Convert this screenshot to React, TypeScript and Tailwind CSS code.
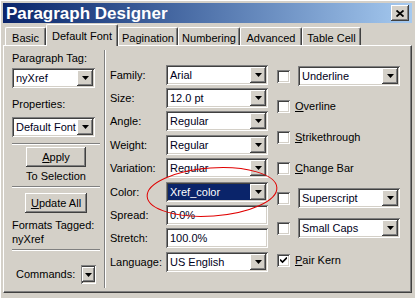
import React from "react";

const raised =
  "shadow-[inset_-1px_-1px_#404040,inset_1px_1px_#ffffff,inset_-2px_-2px_#808080,inset_2px_2px_#d4d0c8]";
const sunken =
  "shadow-[inset_1px_1px_#808080,inset_-1px_-1px_#ffffff,inset_2px_2px_#404040,inset_-2px_-2px_#d4d0c8]";

function Arrow() {
  return (
    <svg width="7" height="4" viewBox="0 0 7 4">
      <path d="M0 0h7L3.5 4z" fill="#000" />
    </svg>
  );
}

function DropBtn({ className = "w-[16px] h-[16px]" }: { className?: string }) {
  return (
    <div className={`flex items-center justify-center bg-[#d4d0c8] ${raised} ${className}`}>
      <Arrow />
    </div>
  );
}

function Combo({ value, width, selected, noButton }: { value: string; width: string; selected?: boolean; noButton?: boolean }) {
  return (
    <div className={`flex h-[20px] p-[2px] bg-white ${sunken} ${width}`}>
      <div
        className={`flex-1 flex items-center pl-[2px] leading-none whitespace-nowrap overflow-hidden ${
          selected ? "bg-[#0a246a] text-white" : "text-[#000020]"
        }`}
      >
        {value}
      </div>
      {!noButton && <DropBtn />}
    </div>
  );
}

function Check({ checked }: { checked?: boolean }) {
  return (
    <div className={`flex items-center justify-center w-[13px] h-[13px] bg-white shrink-0 ${sunken}`}>
      {checked && (
        <svg width="7" height="7" viewBox="0 0 7 7">
          <path d="M0 2.5l2.5 2.5L7 0.5" stroke="#000" strokeWidth="1.6" fill="none" />
        </svg>
      )}
    </div>
  );
}

function Sep() {
  return <div className="h-[2px] border-t border-t-[#808080] border-b border-b-white" />;
}

const tabs = [
  { label: "Basic", w: "w-[41px]" },
  { label: "Default Font", w: "w-[72px]", active: true },
  { label: "Pagination", w: "w-[60px]" },
  { label: "Numbering", w: "w-[62px]" },
  { label: "Advanced", w: "w-[62px]" },
  { label: "Table Cell", w: "w-[59px]" },
];

const fields = [
  { label: "Family:", value: "Arial", mt: "mt-0" },
  { label: "Size:", value: "12.0 pt", mt: "mt-[3px]" },
  { label: "Angle:", value: "Regular", mt: "mt-[3px]" },
  { label: "Weight:", value: "Regular", mt: "mt-[4px]" },
  { label: "Variation:", value: "Regular", mt: "mt-[3px]" },
  { label: "Color:", value: "Xref_color", mt: "mt-[4px]", selected: true },
  { label: "Spread:", value: "0.0%", mt: "mt-[3px]", plain: true },
  { label: "Stretch:", value: "100.0%", mt: "mt-[3px]", plain: true },
  { label: "Language:", value: "US English", mt: "mt-[4px]" },
];

export default function App() {
  return (
    <div className="relative w-[415px] h-[298px] overflow-hidden whitespace-nowrap bg-[#d4d0c8] p-[3px] font-['Liberation_Sans',Arial,sans-serif] text-[11px] text-black shadow-[inset_1px_1px_#ffffff]">
      {/* Title bar */}
      <div className="flex h-[20px] items-center justify-between bg-linear-to-r from-[#0a246a] to-[#a6caf0] pl-[3px] pr-[3px]">
        <span className="text-[17px] font-bold text-white leading-none">Paragraph Designer</span>
        <div className={`flex items-center justify-center w-[18px] h-[16px] bg-[#d4d0c8] ${raised}`}>
          <svg width="8" height="7" viewBox="0 0 8 7">
            <path d="M0.5 0.5l7 6M7.5 0.5l-7 6" stroke="#000" strokeWidth="1.8" />
          </svg>
        </div>
      </div>

      {/* Tabs */}
      <div className="relative z-10 flex h-[22px] items-end pl-[2px]">
        {tabs.map((t) =>
          t.active ? (
            <div
              key={t.label}
              className={`${t.w} h-[22px] -mb-[1px] bg-[#d4d0c8] flex items-start justify-center pt-[3px] rounded-t-[2px] border-t border-l border-white border-r border-r-[#404040] shadow-[inset_-1px_0_#808080]`}
            >
              {t.label}
            </div>
          ) : (
            <div
              key={t.label}
              className={`${t.w} h-[18px] flex items-start justify-center pt-[2px] rounded-t-[2px] border-t border-l border-white border-r border-r-[#404040] shadow-[inset_-1px_0_#808080]`}
            >
              {t.label}
            </div>
          )
        )}
      </div>

      {/* Panel */}
      <div className="flex h-[248px] border-t border-l border-white border-r border-b border-r-[#404040] border-b-[#404040] shadow-[inset_-1px_-1px_#808080]">
        {/* Left column */}
        <div className="flex w-[100px] flex-col pl-[8px] pr-[4px]">
          <div className="mt-[5px] leading-[14px]">Paragraph Tag:</div>
          <div className="mt-[3px]">
            <Combo value="nyXref" width="w-[83px]" />
          </div>
          <div className="mt-[9px] leading-[14px]">Properties:</div>
          <div className="mt-[6px]">
            <Combo value="Default Font" width="w-[83px]" />
          </div>
          <div className="mt-[6px]">
            <Sep />
          </div>
          <div className="mt-[2px] flex flex-col items-center">
            <div className={`flex h-[20px] w-[60px] items-center justify-center ${raised}`}>
              <span>
                <span className="underline">A</span>pply
              </span>
            </div>
            <div className="mt-[2px] leading-[14px]">To Selection</div>
          </div>
          <div className="mt-[3px]">
            <Sep />
          </div>
          <div className="mt-[5px] flex justify-center">
            <div className={`flex h-[20px] w-[62px] items-center justify-center ${raised}`}>
              <span>
                <span className="underline">U</span>pdate All
              </span>
            </div>
          </div>
          <div className="mt-[5px] leading-[14px]">Formats Tagged:</div>
          <div className="leading-[14px]">nyXref</div>
          <div className="mt-[3px]">
            <Sep />
          </div>
          <div className="mt-[14px] flex items-center gap-[6px] pl-[4px]">
            <span>Commands:</span>
            <div className={`flex h-[19px] w-[15px] items-center justify-center p-[1px] ${sunken}`}>
              <DropBtn className="w-[13px] h-[15px]" />
            </div>
          </div>
        </div>

        {/* Vertical separator */}
        <div className="my-[4px] w-[2px] border-l border-l-[#808080] border-r border-r-white" />

        {/* Field column */}
        <div className="flex w-[162px] flex-col pt-[19px] pl-[4px]">
          {fields.map((f) => (
            <div key={f.label} className={`flex h-[20px] items-center ${f.mt}`}>
              <span className="w-[56px]">{f.label}</span>
              <Combo value={f.value} width="w-[102px]" selected={f.selected} noButton={f.plain} />
            </div>
          ))}
        </div>

        {/* Checkbox column */}
        <div className="flex flex-col pt-[20px] pl-[9px]">
          <div className="flex h-[20px] items-center gap-[8px]">
            <Check />
            <Combo value="Underline" width="w-[102px]" />
          </div>
          <div className="mt-[10px] flex h-[20px] items-center gap-[5px]">
            <Check />
            <span>
              <span className="underline">O</span>verline
            </span>
          </div>
          <div className="mt-[11px] flex h-[20px] items-center gap-[5px]">
            <Check />
            <span>
              <span className="underline">S</span>trikethrough
            </span>
          </div>
          <div className="mt-[11px] flex h-[20px] items-center gap-[5px]">
            <Check />
            <span>
              <span className="underline">C</span>hange Bar
            </span>
          </div>
          <div className="mt-[10px] flex h-[20px] items-center gap-[8px]">
            <Check />
            <Combo value="Superscript" width="w-[102px]" />
          </div>
          <div className="mt-[10px] flex h-[20px] items-center gap-[8px]">
            <Check />
            <Combo value="Small Caps" width="w-[102px]" />
          </div>
          <div className="mt-[12px] flex h-[20px] items-center gap-[5px]">
            <Check checked />
            <span>
              <span className="underline">P</span>air Kern
            </span>
          </div>
        </div>
      </div>

      {/* Red annotation ellipse */}
      <svg className="pointer-events-none absolute left-[144px] top-[164px]" width="136" height="56" viewBox="0 0 136 56">
        <ellipse cx="68" cy="28" rx="65" ry="24" fill="none" stroke="#e00000" strokeWidth="1" transform="rotate(-4 68 28)" />
      </svg>
    </div>
  );
}
